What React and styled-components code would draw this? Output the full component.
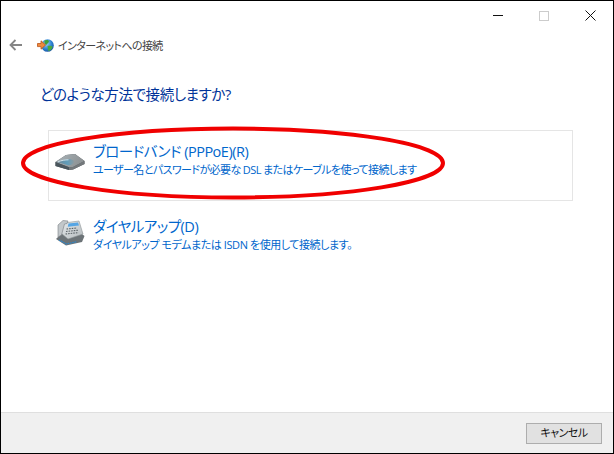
import React from "react";
import styled, { createGlobalStyle } from "styled-components";

const GlobalStyle = createGlobalStyle`
  html, body {
    margin: 0;
    padding: 0;
    background: #fff;
  }
`;

const FONT = `"Open Sans", "Noto Sans CJK JP", sans-serif`;

const BackIcon = () => (
  <svg width="14" height="12" viewBox="0 0 14 12">
    <path d="M6.5 1 L1.5 6 L6.5 11 M1.5 6 H13" fill="none" stroke="#858585" strokeWidth="1.8" />
  </svg>
);

const GlobeIcon = () => (
  <svg width="17" height="15" viewBox="0 0 17 15">
    <defs>
      <radialGradient id="sea" cx="0.4" cy="0.35" r="0.75">
        <stop offset="0" stopColor="#9fd4f5" />
        <stop offset="0.6" stopColor="#2a7fd0" />
        <stop offset="1" stopColor="#14478f" />
      </radialGradient>
    </defs>
    <circle cx="10.5" cy="7.5" r="6.3" fill="url(#sea)" />
    <path d="M7.5 2.6 C9.5 1.6 11.5 2 12 3.4 C11.6 5 10 5.2 9.6 6.8 C8.4 7 7 5.5 7.5 2.6 Z" fill="#3fa03a" />
    <path d="M10.5 8 C12.5 7.4 15 7.6 15.6 8.8 C15 11.5 13 13 11.5 13 C10.5 11.5 11 9.6 10.5 8 Z" fill="#4aa83f" />
    <path d="M0.5 5.5 H4 V2.8 L8.6 7 L4 11.2 V8.6 H0.5 Z" fill="#ef8a3c" stroke="#b8531a" strokeWidth="0.8" />
  </svg>
);

const ModemIcon = () => (
  <svg width="30" height="18" viewBox="0 0 30 18">
    <defs>
      <linearGradient id="modemTop" x1="0" y1="0" x2="1" y2="0.3">
        <stop offset="0" stopColor="#aab4b9" />
        <stop offset="1" stopColor="#8d9294" />
      </linearGradient>
      <linearGradient id="modemSlot" x1="0" y1="0" x2="1" y2="0">
        <stop offset="0" stopColor="#6f8796" />
        <stop offset="0.6" stopColor="#5f9dba" />
        <stop offset="1" stopColor="#8d9a9f" />
      </linearGradient>
    </defs>
    <path d="M0.5 9 L11 2 L20 1 L29.5 8 L29.5 11 L18 16.5 L14 17 L0.5 13 Z" fill="#585c5f" />
    <path d="M0.5 9 L11 2 L20 1 L29.5 8 L18 14 L14 14.3 Z" fill="url(#modemTop)" />
    <path d="M2 9 C6 7 11 6 15 6.2 C18 6.4 20 8 19 9.6 C18 11.4 16 12.2 13.5 12.2 Z" fill="url(#modemSlot)" />
    <path d="M3 8.8 C6.5 7.4 10 6.8 13.5 6.8" fill="none" stroke="#dbe9ef" strokeWidth="0.9" />
    <path d="M0.5 9 L14 14.3 L14 17 L0.5 13 Z" fill="#4a565d" />
    <path d="M14 14.3 L18 14 L29.5 8 L29.5 11 L18 16.5 L14 17 Z" fill="#73787b" />
  </svg>
);

const PhoneIcon = () => (
  <svg width="30" height="27" viewBox="0 0 30 27">
    <defs>
      <linearGradient id="phoneBody" x1="0" y1="0" x2="1" y2="1">
        <stop offset="0" stopColor="#e8ecee" />
        <stop offset="1" stopColor="#b4babd" />
      </linearGradient>
    </defs>
    <path d="M1 20 L11 26.5 L27 23 L29.5 17 L27 15 L6 15 Z" fill="#6c7377" />
    <path d="M6 14 L9 4 L24 2 L28 15 L13 20 Z" fill="url(#phoneBody)" stroke="#8d9396" strokeWidth="0.6" />
    <path d="M3 6 L8 1.5 L13 2 L12 4.5 L9.5 5 L6.5 16 L3 18 Z" fill="#c2c7ca" stroke="#7a8084" strokeWidth="0.6" />
    <path d="M13.5 4.6 L23 3.4 L24 6.6 L12.8 7.8 Z" fill="#55a5e4" />
    <path d="M11.5 10 L22 9 M11 12.5 L23 11.2 M10.5 15 L23.5 13.6" stroke="#5d6569" strokeWidth="1.1" strokeDasharray="1.6 1" />
    <path d="M4 21 L11.5 25 L22 22.6" fill="none" stroke="#2f86c8" strokeWidth="1.2" strokeDasharray="1.6 0.8" />
  </svg>
);

const App = () => {
  const options = [
    {
      title: "ブロードバンド (PPPoE)(R)",
      text: "ユーザー名とパスワードが必要な DSL またはケーブルを使って接続します",
      icon: <ModemIcon />,
      selected: true,
      spacing: -0.6,
      iconLift: 7,
    },
    {
      title: "ダイヤルアップ(D)",
      text: "ダイヤルアップ モデムまたは ISDN を使用して接続します。",
      icon: <PhoneIcon />,
      spacing: -0.43,
      iconLift: 16,
    },
  ];

  return (
    <>
      <GlobalStyle />
      <Window>
        <TitleBar>
          <MinimizeButton />
          <MaximizeButton />
          <CloseButton>
            <svg width="11" height="11" viewBox="0 0 11 11">
              <path d="M0.5 0.5 L10.5 10.5 M10.5 0.5 L0.5 10.5" stroke="#111" strokeWidth="1" />
            </svg>
          </CloseButton>
        </TitleBar>
        <NavBar>
          <BackButton>
            <BackIcon />
          </BackButton>
          <GlobeIcon />
          <WizardTitle>インターネットへの接続</WizardTitle>
        </NavBar>
        <Content>
          <Heading>どのような方法で接続しますか?</Heading>
          <OptionList>
            {options.map((option) => (
              <Option key={option.title} $selected={option.selected}>
                <OptionIcon $lift={option.iconLift}>{option.icon}</OptionIcon>
                <OptionBody>
                  <OptionTitle>{option.title}</OptionTitle>
                  <OptionText $spacing={option.spacing}>{option.text}</OptionText>
                </OptionBody>
              </Option>
            ))}
          </OptionList>
          <Highlight width="428" height="76" viewBox="0 0 428 76">
            <ellipse cx="214" cy="38" rx="210" ry="34.5" fill="none" stroke="#f00000" strokeWidth="4" />
          </Highlight>
        </Content>
        <Footer>
          <CancelButton>キャンセル</CancelButton>
        </Footer>
      </Window>
    </>
  );
};

const Window = styled.div`
  display: flex;
  flex-direction: column;
  box-sizing: border-box;
  width: 614px;
  height: 454px;
  border: 1px solid #000;
  background: #fff;
  font-family: ${FONT};
  font-feature-settings: "palt";
`;

const TitleBar = styled.div`
  display: flex;
  justify-content: flex-end;
  align-items: center;
  height: 29px;
`;

const ControlSlot = styled.div`
  display: flex;
  align-items: center;
  justify-content: center;
  width: 46px;
  height: 29px;
`;

const MinimizeButton = styled(ControlSlot)`
  &::before {
    content: "";
    width: 10px;
    height: 1px;
    background: #111;
  }
`;

const MaximizeButton = styled(ControlSlot)`
  &::before {
    content: "";
    width: 8px;
    height: 8px;
    border: 1px solid #cccccc;
  }
`;

const CloseButton = styled(ControlSlot)``;

const NavBar = styled.div`
  display: flex;
  align-items: center;
  height: 30px;
  padding-left: 8px;
`;

const BackButton = styled.div`
  display: flex;
  width: 28px;
`;

const WizardTitle = styled.span`
  margin-left: 4px;
  padding-top: 2px;
  font-size: 11px;
  letter-spacing: -0.6px;
  line-height: 16px;
  color: #444;
`;

const Content = styled.div`
  position: relative;
  flex: 1;
  padding: 0 40px 0 47px;
`;

const Heading = styled.h1`
  margin: 0 0 0 -8px;
  padding-top: 25px;
  height: 45px;
  font-size: 14.5px;
  letter-spacing: -0.4px;
  font-weight: 400;
  line-height: 20px;
  color: #003399;
`;

const OptionList = styled.div`
  display: flex;
  flex-direction: column;
  gap: 4px;
`;

const Option = styled.div`
  display: flex;
  align-items: center;
  box-sizing: border-box;
  height: 71px;
  width: 525px;
  padding: 0 0 0 5px;
  border: 1px solid ${(props) => (props.$selected ? "#e5e5e5" : "transparent")};
`;

const OptionIcon = styled.div`
  display: flex;
  justify-content: center;
  width: 32px;
  margin-right: 7px;
  padding-bottom: ${(props) => props.$lift}px;
`;

const OptionBody = styled.div`
  padding-bottom: 12px;
`;

const OptionTitle = styled.div`
  font-size: 14.5px;
  letter-spacing: -0.5px;
  line-height: 20px;
  color: #0066cc;
`;

const OptionText = styled.div`
  font-size: 11px;
  letter-spacing: ${(props) => props.$spacing}px;
  line-height: 16px;
  color: #0066cc;
`;

const Highlight = styled.svg`
  position: absolute;
  left: 18px;
  top: 65px;
  pointer-events: none;
`;

const Footer = styled.div`
  display: flex;
  justify-content: flex-end;
  align-items: center;
  box-sizing: border-box;
  height: 41px;
  padding-right: 11px;
  border-top: 1px solid #dfdfdf;
  background: #f0f0f0;
`;

const CancelButton = styled.button`
  box-sizing: border-box;
  width: 76px;
  height: 21px;
  padding: 0;
  border: 1px solid #adadad;
  background: #e1e1e1;
  font-family: ${FONT};
  font-feature-settings: "palt";
  font-size: 11px;
  letter-spacing: -0.5px;
  line-height: 18px;
  color: #111;
`;

export default App;
